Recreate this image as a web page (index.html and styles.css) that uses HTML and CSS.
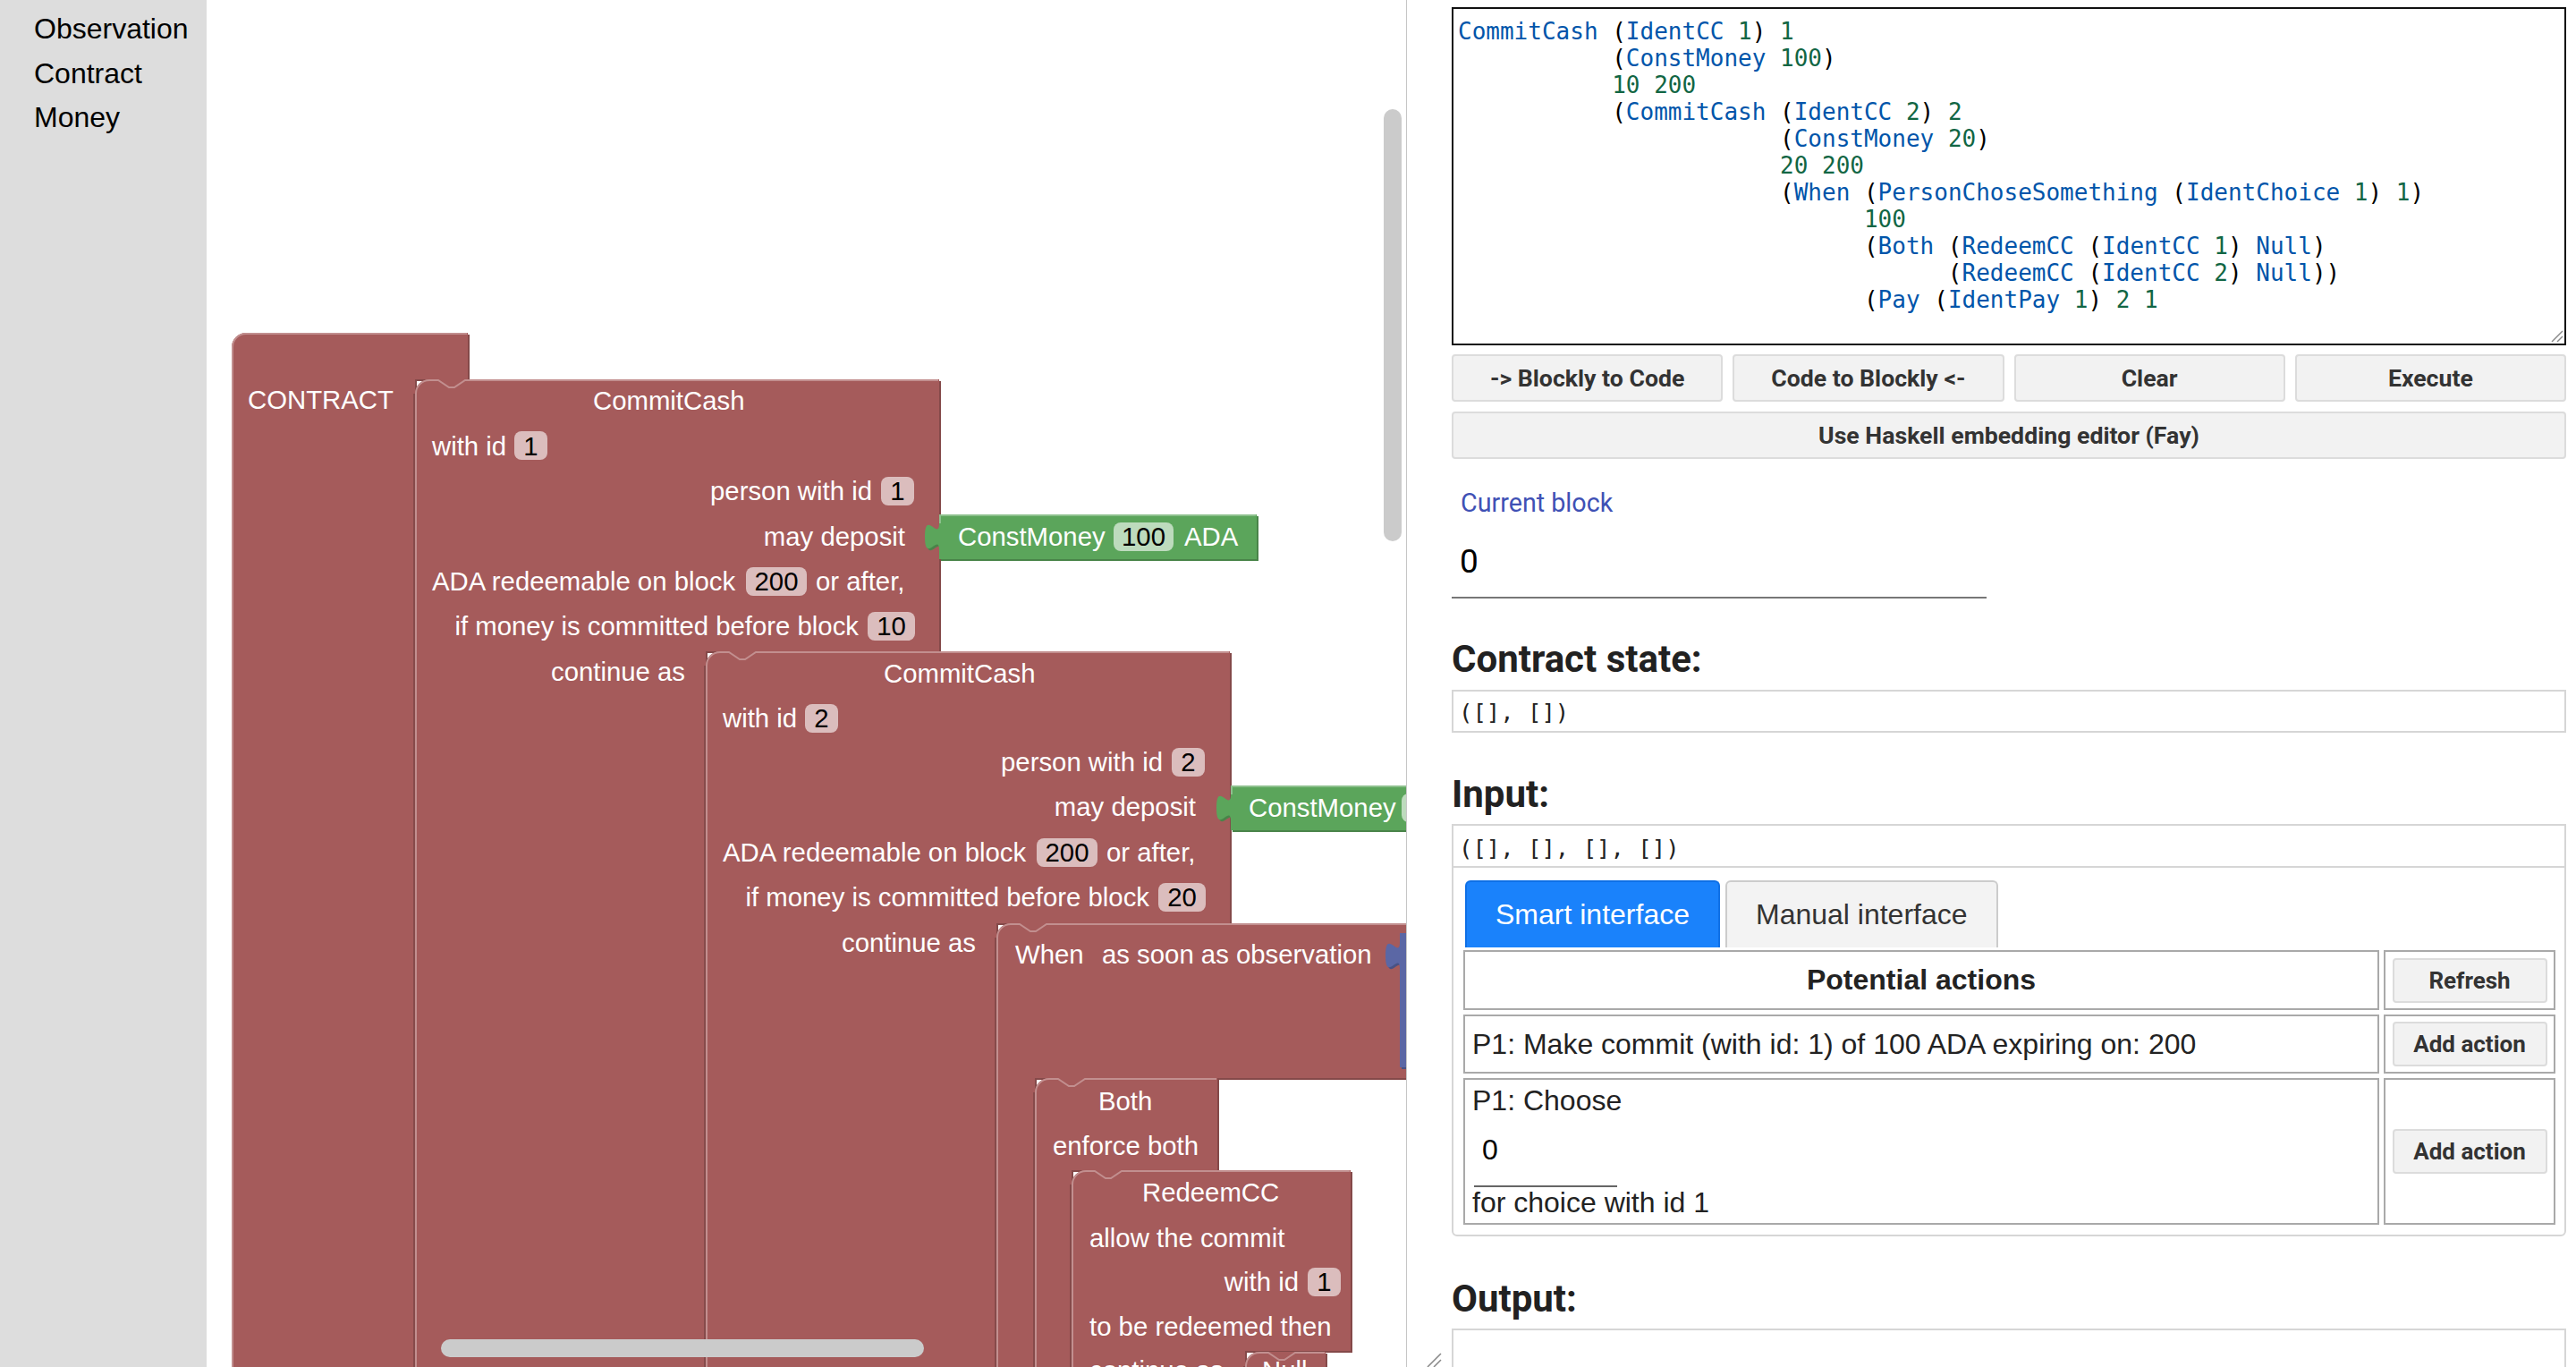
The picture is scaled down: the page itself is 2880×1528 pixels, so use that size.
FILE: index.html
```html
<!DOCTYPE html>
<html>
<head>
<meta charset="utf-8">
<title>Marlowe</title>
<link rel="stylesheet" href="styles.css">
</head>
<body>
<div class="page">
  <div class="left">
    <div class="toolbox">
      <div class="cat">Observation</div>
      <div class="cat">Contract</div>
      <div class="cat">Money</div>
    </div>
    <div class="workspace">
      <svg class="ws" width="1341" height="1528" viewBox="231 0 1341 1528" xmlns="http://www.w3.org/2000/svg">
        <!-- CONTRACT -->
        <path class="rd" transform="translate(2,2)" d="M259,388 A16,16 0 0 1 275,372 H523 V424 H464 V1600 H259 Z"/>
        <path class="r" d="M259,388 A16,16 0 0 1 275,372 H523 V424 H464 V1600 H259 Z"/>
        <path class="rl" d="M260,1600 V388 A15,15 0 0 1 275,373 H522"/>
        <text class="t" x="277" y="457">CONTRACT</text>

        <!-- CommitCash 1 -->
        <line class="sep" x1="463" y1="440" x2="463" y2="1600"/>
        <path class="rd" transform="translate(2,2)" d="M464,440 A16,16 0 0 1 480,424 H1050 V728 H789 V1600 H464 Z"/>
        <path class="r" d="M464,440 A16,16 0 0 1 480,424 H1050 V728 H789 V1600 H464 Z"/>
        <path class="rl" d="M465,1600 V440 A15,15 0 0 1 480,425 H490 L502,433 H508 L520,425 H1049"/>
        <text class="t" x="663" y="458">CommitCash</text>
        <text class="t" x="483" y="509">with id</text>
        <rect class="f" x="575" y="482" width="37" height="32" rx="8"/>
        <text class="t ft m" x="593.5" y="509">1</text>
        <text class="t e" x="975" y="559">person with id</text>
        <rect class="f" x="985" y="533" width="37" height="32" rx="8"/>
        <text class="t ft m" x="1003.5" y="559">1</text>
        <text class="t e" x="1012" y="610">may deposit</text>
        <text class="t" x="483" y="660">ADA redeemable on block</text>
        <rect class="f" x="834" y="634" width="68" height="32" rx="8"/>
        <text class="t ft m" x="868" y="660">200</text>
        <text class="t" x="912" y="660">or after,</text>
        <text class="t e" x="960" y="710">if money is committed before block</text>
        <rect class="f" x="970" y="684" width="53" height="32" rx="8"/>
        <text class="t ft m" x="996.5" y="710">10</text>
        <text class="t e" x="766" y="761">continue as</text>

        <!-- ConstMoney 1 -->
        <path class="gd" transform="translate(2,2)" d="M1050,575 H1405 V625 H1050 V615 C1050,595 1034,631 1034,600 C1034,569 1050,605 1050,585 Z"/>
        <path class="g" d="M1050,575 H1405 V625 H1050 V615 C1050,595 1034,631 1034,600 C1034,569 1050,605 1050,585 Z"/>
        <path class="gl" d="M1051,585 V576 H1404"/>
        <text class="t" x="1071" y="610">ConstMoney</text>
        <rect class="fg" x="1245" y="584" width="67" height="32" rx="8"/>
        <text class="t ft m" x="1278.5" y="610">100</text>
        <text class="t" x="1324" y="610">ADA</text>

        <!-- CommitCash 2 -->
        <line class="sep" x1="788" y1="744" x2="788" y2="1600"/>
        <path class="rd" transform="translate(2,2)" d="M789,744 A16,16 0 0 1 805,728 H1375 V1032 H1114 V1600 H789 Z"/>
        <path class="r" d="M789,744 A16,16 0 0 1 805,728 H1375 V1032 H1114 V1600 H789 Z"/>
        <path class="rl" d="M790,1600 V744 A15,15 0 0 1 805,729 H815 L827,737 H833 L845,729 H1374"/>
        <text class="t" x="988" y="763">CommitCash</text>
        <text class="t" x="808" y="813">with id</text>
        <rect class="f" x="900" y="787" width="37" height="32" rx="8"/>
        <text class="t ft m" x="918.5" y="813">2</text>
        <text class="t e" x="1300" y="862">person with id</text>
        <rect class="f" x="1310" y="836" width="37" height="32" rx="8"/>
        <text class="t ft m" x="1328.5" y="862">2</text>
        <text class="t e" x="1337" y="912">may deposit</text>
        <text class="t" x="808" y="963">ADA redeemable on block</text>
        <rect class="f" x="1159" y="937" width="68" height="32" rx="8"/>
        <text class="t ft m" x="1193" y="963">200</text>
        <text class="t" x="1237" y="963">or after,</text>
        <text class="t e" x="1285" y="1013">if money is committed before block</text>
        <rect class="f" x="1295" y="987" width="53" height="32" rx="8"/>
        <text class="t ft m" x="1321.5" y="1013">20</text>
        <text class="t e" x="1091" y="1064">continue as</text>

        <!-- ConstMoney 2 -->
        <path class="gd" transform="translate(2,2)" d="M1376,878 H1620 V928 H1376 V918 C1376,898 1360,934 1360,903 C1360,872 1376,908 1376,888 Z"/>
        <path class="g" d="M1376,878 H1620 V928 H1376 V918 C1376,898 1360,934 1360,903 C1360,872 1376,908 1376,888 Z"/>
        <path class="gl" d="M1377,888 V879 H1620"/>
        <text class="t" x="1396" y="913">ConstMoney</text>
        <rect class="fg" x="1567" y="887" width="66" height="32" rx="8"/>

        <!-- When -->
        <line class="sep" x1="1113" y1="1048" x2="1113" y2="1600"/>
        <path class="rd" transform="translate(2,2)" d="M1114,1048 A16,16 0 0 1 1130,1032 H1620 V1205 H1157 V1600 H1114 Z"/>
        <path class="r" d="M1114,1048 A16,16 0 0 1 1130,1032 H1620 V1205 H1157 V1600 H1114 Z"/>
        <path class="rl" d="M1115,1600 V1048 A15,15 0 0 1 1130,1033 H1140 L1152,1041 H1158 L1170,1033 H1620"/>
        <text class="t" x="1135" y="1077">When</text>
        <text class="t" x="1232" y="1077">as soon as observation</text>

        <!-- observation (blue) -->
        <path class="bd" transform="translate(2,2)" d="M1565,1043 H1620 V1193 H1565 V1083 C1565,1063 1549,1099 1549,1068 C1549,1037 1565,1073 1565,1053 Z"/>
        <path class="b" d="M1565,1043 H1620 V1193 H1565 V1083 C1565,1063 1549,1099 1549,1068 C1549,1037 1565,1073 1565,1053 Z"/>

        <!-- Both -->
        <line class="sep" x1="1156" y1="1221" x2="1156" y2="1600"/>
        <path class="rd" transform="translate(2,2)" d="M1157,1221 A16,16 0 0 1 1173,1205 H1361 V1308 H1198 V1600 H1157 Z"/>
        <path class="r" d="M1157,1221 A16,16 0 0 1 1173,1205 H1361 V1308 H1198 V1600 H1157 Z"/>
        <path class="rl" d="M1158,1600 V1221 A15,15 0 0 1 1173,1206 H1183 L1195,1214 H1201 L1213,1206 H1360"/>
        <text class="t" x="1228" y="1241">Both</text>
        <text class="t" x="1177" y="1291">enforce both</text>

        <!-- RedeemCC -->
        <line class="sep" x1="1197" y1="1324" x2="1197" y2="1600"/>
        <path class="rd" transform="translate(2,2)" d="M1198,1324 A16,16 0 0 1 1214,1308 H1510 V1510 H1392 V1600 H1198 Z"/>
        <path class="r" d="M1198,1324 A16,16 0 0 1 1214,1308 H1510 V1510 H1392 V1600 H1198 Z"/>
        <path class="rl" d="M1199,1600 V1324 A15,15 0 0 1 1214,1309 H1224 L1236,1317 H1242 L1254,1309 H1509"/>
        <text class="t" x="1277" y="1343">RedeemCC</text>
        <text class="t" x="1218" y="1394">allow the commit</text>
        <text class="t e" x="1452" y="1443">with id</text>
        <rect class="f" x="1462" y="1417" width="37" height="32" rx="8"/>
        <text class="t ft m" x="1480.5" y="1443">1</text>
        <text class="t" x="1218" y="1493">to be redeemed then</text>
        <text class="t" x="1218" y="1542">continue as</text>

        <!-- Null -->
        <line class="sep" x1="1391" y1="1527" x2="1391" y2="1600"/>
        <path class="rd" transform="translate(2,2)" d="M1392,1527 A16,16 0 0 1 1408,1511 H1482 V1600 H1392 Z"/>
        <path class="r" d="M1392,1527 A16,16 0 0 1 1408,1511 H1482 V1600 H1392 Z"/>
        <path class="rl" d="M1393,1600 V1527 A15,15 0 0 1 1408,1512 H1418 L1430,1520 H1436 L1448,1512 H1481"/>
        <text class="t" x="1411" y="1542">Null</text>

        <!-- scrollbars -->
        <rect class="sb" x="493" y="1497" width="540" height="20" rx="10"/>
        <rect class="sb" x="1547" y="122" width="20" height="483" rx="10"/>
      </svg>
    </div>
  </div>

  <div class="right">
    <div class="editor">
      <div class="code">
        <div class="ln"><span class="k">CommitCash</span> (<span class="k">IdentCC</span> <span class="n">1</span>) <span class="n">1</span></div>
        <div class="ln i11">(<span class="k">ConstMoney</span> <span class="n">100</span>)</div>
        <div class="ln i11"><span class="n">10</span> <span class="n">200</span></div>
        <div class="ln i11">(<span class="k">CommitCash</span> (<span class="k">IdentCC</span> <span class="n">2</span>) <span class="n">2</span></div>
        <div class="ln i23">(<span class="k">ConstMoney</span> <span class="n">20</span>)</div>
        <div class="ln i23"><span class="n">20</span> <span class="n">200</span></div>
        <div class="ln i23">(<span class="k">When</span> (<span class="k">PersonChoseSomething</span> (<span class="k">IdentChoice</span> <span class="n">1</span>) <span class="n">1</span>)</div>
        <div class="ln i29"><span class="n">100</span></div>
        <div class="ln i29">(<span class="k">Both</span> (<span class="k">RedeemCC</span> (<span class="k">IdentCC</span> <span class="n">1</span>) <span class="k">Null</span>)</div>
        <div class="ln i35">(<span class="k">RedeemCC</span> (<span class="k">IdentCC</span> <span class="n">2</span>) <span class="k">Null</span>))</div>
        <div class="ln i29">(<span class="k">Pay</span> (<span class="k">IdentPay</span> <span class="n">1</span>) <span class="n">2</span> <span class="n">1</span></div>
      </div>
      <svg class="grip-ed" width="16" height="16" viewBox="0 0 16 16"><line x1="15" y1="3" x2="3" y2="15"/><line x1="15" y1="9" x2="9" y2="15"/></svg>
    </div>

    <div class="btnrow">
      <button class="btn">-&gt; Blockly to Code</button>
      <button class="btn">Code to Blockly &lt;-</button>
      <button class="btn">Clear</button>
      <button class="btn">Execute</button>
    </div>
    <button class="btn wide">Use Haskell embedding editor (Fay)</button>

    <div class="cb">
      <div class="cb-label">Current block</div>
      <div class="cb-val">0</div>
    </div>

    <h3 class="h h-state">Contract state:</h3>
    <div class="state">([], [])</div>

    <h3 class="h h-input">Input:</h3>
    <div class="inbox">
      <div class="inrow">([], [], [], [])</div>
      <div class="tabs">
        <div class="tab on">Smart interface</div>
        <div class="tab">Manual interface</div>
      </div>
      <table class="act">
        <colgroup><col class="c1"><col class="c2"></colgroup>
        <tr>
          <td class="hd"><div class="hdi">Potential actions</div></td>
          <td class="bc"><button class="sbtn">Refresh</button></td>
        </tr>
        <tr>
          <td class="tx"><div class="r2">P1: Make commit (with id: 1) of 100 ADA expiring on: 200</div></td>
          <td class="bc"><button class="sbtn">Add action</button></td>
        </tr>
        <tr>
          <td class="tx">
            <div class="pl">P1: Choose</div>
            <div class="ch">0</div>
            <div class="fl">for choice with id 1</div>
          </td>
          <td class="bc"><button class="sbtn">Add action</button></td>
        </tr>
      </table>
    </div>

    <h3 class="h h-output">Output:</h3>
    <div class="outbox"></div>
  </div>

  <svg class="grip-pg" width="18" height="18" viewBox="0 0 18 18"><line x1="17" y1="2" x2="2" y2="17"/><line x1="17" y1="9" x2="9" y2="17"/></svg>
</div>
</body>
</html>
```

FILE: styles.css
```css
* { box-sizing: border-box; }
html, body { margin: 0; padding: 0; }
body {
  width: 2880px;
  height: 1528px;
  overflow: hidden;
  background: #fff;
  font-family: "Liberation Sans", Arial, sans-serif;
}
.page { display: flex; height: 1528px; position: relative; overflow: hidden; }

/* ---------- left: blockly ---------- */
.left { display: flex; width: 1573px; height: 1528px; flex: none; }
.toolbox { width: 231px; flex: none; background: #ddd; padding-top: 8px; }
.cat { font-size: 32px; line-height: 49.5px; padding-left: 38px; color: #000; }
.workspace { width: 1342px; flex: none; border-right: 1px solid #c6c6c6; overflow: hidden; background: #fff; }
.ws { display: block; }

.r { fill: #a55b5b; }
.rd { fill: #844949; }
.rl { fill: none; stroke: #c28f8f; stroke-width: 2; }
.sep { stroke: #7d4444; stroke-width: 1.5; }
.g { fill: #5ba55b; }
.gd { fill: #498449; }
.gl { fill: none; stroke: #8cc08c; stroke-width: 2; }
.b { fill: #5b67a5; }
.bd { fill: #495284; }
.f { fill: #dbbdbd; }
.fg { fill: #bddbbd; }
.sb { fill: #cbcbcb; }
.t { font-family: "Liberation Sans", Arial, sans-serif; font-size: 29.33px; fill: #fff; }
.ft { fill: #000; }
.m { text-anchor: middle; }
.e { text-anchor: end; }

/* ---------- right panel ---------- */
.right { width: 1246px; margin-left: 50px; flex: none; }

.editor {
  position: relative;
  margin-top: 8px;
  height: 378px;
  border: 2px solid #111;
  padding: 10px 0 0 5px;
  overflow: hidden;
}
.code {
  font-family: "DejaVu Sans Mono", "Liberation Mono", monospace;
  font-size: 26px;
  line-height: 30px;
  color: #000;
}
.ln { white-space: pre; height: 30px; }
.i11 { padding-left: 11ch; }
.i23 { padding-left: 23ch; }
.i29 { padding-left: 29ch; }
.i35 { padding-left: 35ch; }
.k { color: #05a; }
.n { color: #164; }
.grip-ed { position: absolute; right: 1px; bottom: 1px; }
.grip-ed line, .grip-pg line { stroke: #888; stroke-width: 1.5; }
.grip-pg { position: absolute; left: 1594px; top: 1511px; }

.btn {
  height: 53px;
  padding: 0;
  background: #f2f2f2;
  border: 2px solid #dcdcdc;
  border-radius: 4px;
  font-family: Roboto, "Liberation Sans", sans-serif;
  font-weight: bold;
  font-size: 26.67px;
  color: #333;
}
.btnrow {
  display: grid;
  grid-template-columns: repeat(4, 1fr);
  column-gap: 11px;
  margin-top: 10px;
}
.wide { display: block; width: 100%; margin-top: 11px; }

.cb { width: 598px; margin-top: 33px; }
.cb-label {
  font-family: Roboto, sans-serif;
  font-size: 28.7px;
  line-height: 32px;
  color: #3f51b5;
  padding-left: 10px;
}
.cb-val {
  font-family: Roboto, sans-serif;
  font-size: 37px;
  line-height: 44px;
  margin-top: 28px;
  padding: 0 0 17px 9px;
  border-bottom: 2px solid #777;
  color: #000;
}

.h {
  margin: 0;
  font-family: Roboto, sans-serif;
  font-weight: bold;
  font-size: 42px;
  line-height: 42px;
  color: #212121;
}
.h-state { margin-top: 47px; }
.h-input { margin-top: 48px; }
.h-output { margin-top: 49px; }

.state {
  margin-top: 13px;
  height: 48px;
  border: 2px solid #d6d6d6;
  padding: 3px 0 0 6px;
  font-family: "DejaVu Sans Mono", monospace;
  font-size: 25.6px;
  line-height: 41px;
  color: #222;
}

.inbox {
  margin-top: 12px;
  height: 461px;
  border: 2px solid #d6d6d6;
  border-radius: 0 0 6px 6px;
}
.inrow {
  height: 47px;
  border-bottom: 2px solid #d6d6d6;
  padding: 5px 0 0 6px;
  font-family: "DejaVu Sans Mono", monospace;
  font-size: 25.6px;
  line-height: 40px;
  color: #222;
}
.tabs { display: flex; gap: 6px; margin: 14px 0 0 13px; height: 75px; }
.tab {
  font-family: "Liberation Sans", Arial, sans-serif;
  font-size: 32px;
  line-height: 73px;
  padding: 0 32px;
  border: 2px solid #cccccc;
  border-bottom: none;
  border-radius: 6px 6px 0 0;
  background: #f3f3f3;
  color: #333;
}
.tab.on { background: #1a82fb; border-color: #0f70e6; color: #fff; }

.act {
  border-collapse: separate;
  border-spacing: 5px 5px;
  margin: -2px 0 0 6px;
  width: 1231px;
  table-layout: fixed;
}
.c1 { width: 1024px; }
.c2 { width: 192px; }
.act td {
  border: 2px solid #a9a9a9;
  padding: 0;
  font-family: "Liberation Sans", Arial, sans-serif;
  font-size: 32px;
  color: #222;
}
.act td.tx { padding-left: 8px; vertical-align: top; }
.act td.hd { text-align: center; }
.hdi { height: 63px; line-height: 63px; font-weight: bold; }
.act td.bc { text-align: center; vertical-align: middle; }
.r2 { height: 62px; line-height: 62px; }
.pl { height: 46px; line-height: 46px; }
.ch {
  width: 160px;
  height: 74px;
  margin-left: 2px;
  padding-left: 9px;
  line-height: 64px;
  font-size: 32px;
  color: #000;
  border-bottom: 2px solid #666;
}
.fl { height: 40px; line-height: 34px; }
.sbtn {
  width: 173px;
  height: 50px;
  padding: 0;
  background: #f2f2f2;
  border: 2px solid #dcdcdc;
  border-radius: 4px;
  font-family: Roboto, "Liberation Sans", sans-serif;
  font-weight: bold;
  font-size: 26px;
  color: #333;
}

.outbox { margin-top: 12px; height: 200px; border: 2px solid #d6d6d6; }
```
